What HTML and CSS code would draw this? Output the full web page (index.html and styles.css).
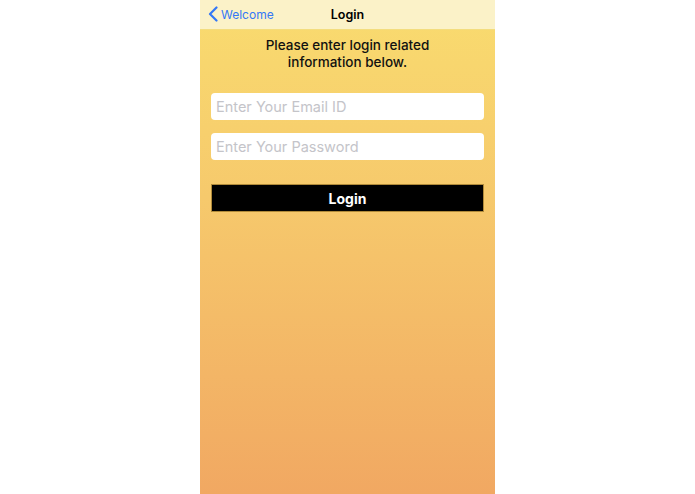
FILE: index.html
```html
<!DOCTYPE html>
<html lang="en">
<head>
  <meta charset="UTF-8" />
  <meta name="viewport" content="width=device-width, initial-scale=1.0" />
  <title>Login</title>
  <link rel="stylesheet" href="styles.css">
</head>
<body>
  <div class="screen">
    <div class="navbar">
      <a class="back" href="#">
        <svg width="10" height="16" viewBox="0 0 10 16"><path d="M8.5 1.5 L2 8 L8.5 14.5" fill="none" stroke="#3478f6" stroke-width="2.2" stroke-linecap="round" stroke-linejoin="round"/></svg>
        <span>Welcome</span>
      </a>
      <div class="title">Login</div>
    </div>

    <div class="content">
      <p class="intro">Please enter login related<br>information below.</p>

      <form class="login-form">
        <input type="email" class="field" placeholder="Enter Your Email ID" />
        <input type="password" class="field" placeholder="Enter Your Password" />
        <button type="button" class="btn">Login</button>
      </form>
    </div>
  </div>
</body>
</html>
```

FILE: styles.css
```css
body {
  margin: 0;
  background: white;
  font-family: Inter, "Liberation Sans", sans-serif;
}

.screen {
  width: 295px;
  height: 494px;
  margin: 0 auto;
  display: flex;
  flex-direction: column;
  background: linear-gradient(to bottom, #f9dc6f 0%, #f6c96c 40%, #f1a862 100%);
}

.navbar {
  position: relative;
  height: 29px;
  background: #fbf2c8;
  border-bottom: 1px solid #f3dd7e;
  display: flex;
  align-items: center;
  justify-content: center;
}

.back {
  position: absolute;
  left: 8px;
  top: 6px;
  display: flex;
  align-items: center;
  gap: 3px;
  color: #3478f6;
  text-decoration: none;
  font-size: 12px;
}

.title {
  font-size: 12.5px;
  font-weight: 600;
  color: #000;
}

.content {
  padding: 0 11px;
}

.intro {
  margin: 7px 0 0;
  text-align: center;
  font-size: 13.5px;
  font-weight: 500;
  line-height: 17px;
  color: #111;
}

.login-form {
  display: flex;
  flex-direction: column;
  margin-top: 22px;
}

.field {
  height: 27px;
  box-sizing: border-box;
  border: none;
  border-radius: 4px;
  background: white;
  padding: 0 5px;
  font-family: inherit;
  font-size: 14.5px;
  margin-bottom: 13px;
}

.field::placeholder {
  color: #c4c4c9;
}

.btn {
  margin-top: 11px;
  height: 28px;
  background: #000;
  color: white;
  border: 1px solid #b08a3a;
  font-family: inherit;
  font-size: 14px;
  font-weight: 700;
  cursor: pointer;
}
```
